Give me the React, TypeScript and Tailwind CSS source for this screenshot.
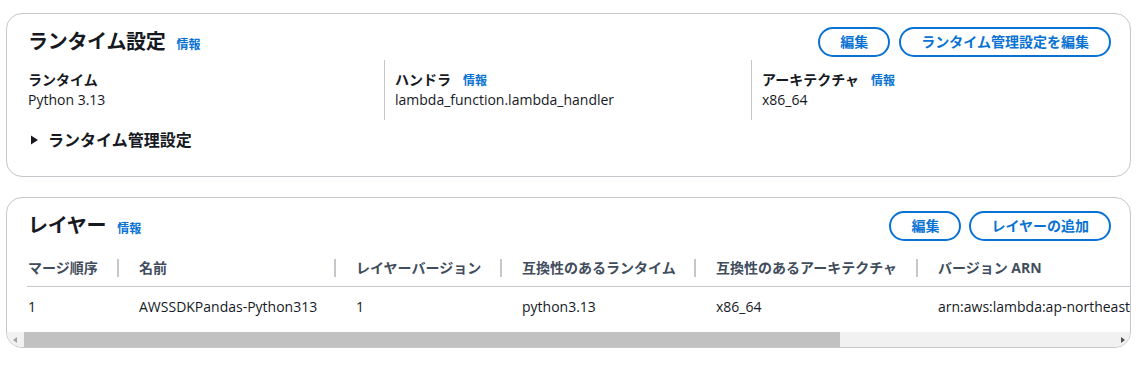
import React from 'react';

const font = { fontFamily: '"Open Sans", "Noto Sans CJK JP", sans-serif' };

const InfoLink = ({ className = '' }: { className?: string }) => (
  <a className={`text-[12px] font-bold text-[#0972d3] leading-[16px] ${className}`}>情報</a>
);

const PillButton = ({ children }: { children: React.ReactNode }) => (
  <button className="h-[30px] rounded-full border-2 border-[#0972d3] px-[20px] text-[14px] font-bold leading-[26px] text-[#0972d3] bg-white">
    {children}
  </button>
);

const KeyValue = ({ label, value, info, first }: { label: string; value: string; info?: boolean; first?: boolean }) => (
  <div className={`border-l pl-[10px] py-[10px] ${first ? 'border-transparent' : 'border-[#c6c6cd]'}`}>
    <div className="flex items-baseline h-[20px]">
      <span className="text-[14px] font-bold leading-[20px] text-[#16191f]">{label}</span>
      {info && <InfoLink className="ml-[12px]" />}
    </div>
    <div className="text-[14px] leading-[20px] text-[#16191f]">{value}</div>
  </div>
);

const cols = [
  { w: 'w-[92px]', pl: 'pl-[1px]', head: 'マージ順序', val: '1' },
  { w: 'w-[217px]', pl: 'pl-[20px]', head: '名前', val: 'AWSSDKPandas-Python313' },
  { w: 'w-[166px]', pl: 'pl-[20px]', head: 'レイヤーバージョン', val: '1' },
  { w: 'w-[194px]', pl: 'pl-[20px]', head: '互換性のあるランタイム', val: 'python3.13' },
  { w: 'w-[222px]', pl: 'pl-[20px]', head: '互換性のあるアーキテクチャ', val: 'x86_64' },
  { w: 'w-[560px]', pl: 'pl-[20px]', head: 'バージョン ARN', val: 'arn:aws:lambda:ap-northeast-1:336392948345:layer:AWSSDKPandas-Python313:1', last: true },
];

export default function App() {
  return (
    <div className="min-h-screen bg-white pt-[13px] text-[#16191f]" style={font}>
      {/* Runtime settings */}
      <div className="ml-[6px] w-[1125px] rounded-[16px] border border-[#c6c6cd] bg-white overflow-hidden pb-[26px]">
        <div className="flex items-center justify-between pl-[21px] pr-[19px] pt-[13px] h-[43px] box-border">
          <div className="flex items-baseline">
            <h2 className="text-[20px] font-bold leading-[26px] tracking-[-0.3px]">ランタイム設定</h2>
            <InfoLink className="ml-[11px]" />
          </div>
          <div className="flex gap-[9px]">
            <PillButton>編集</PillButton>
            <PillButton>ランタイム管理設定を編集</PillButton>
          </div>
        </div>

        <div className="mx-[10px] mt-[3px] grid grid-cols-3 w-[1101px]">
          <KeyValue label="ランタイム" value="Python 3.13" first />
          <KeyValue label="ハンドラ" value="lambda_function.lambda_handler" info />
          <KeyValue label="アーキテクチャ" value="x86_64" info />
        </div>

        <div className="mt-[10px] flex items-center gap-[4px] pl-[21px] h-[20px]">
          <svg width="16" height="16" viewBox="0 0 16 16">
            <path d="M3 3.5 L10 8 L3 12.5 Z" fill="#16191f" />
          </svg>
          <span className="text-[16px] font-bold leading-[20px]">ランタイム管理設定</span>
        </div>
      </div>

      {/* Layers */}
      <div className="ml-[6px] mt-[20px] w-[1125px] rounded-[16px] border border-[#c6c6cd] bg-white overflow-hidden">
        <div className="flex items-center justify-between pl-[21px] pr-[19px] pt-[13px] h-[43px] box-border">
          <div className="flex items-baseline">
            <h2 className="text-[20px] font-bold leading-[26px] tracking-[-0.3px]">レイヤー</h2>
            <InfoLink className="ml-[11px]" />
          </div>
          <div className="flex gap-[8px]">
            <PillButton>編集</PillButton>
            <PillButton>レイヤーの追加</PillButton>
          </div>
        </div>

        <div className="ml-[20px] mt-[9px] overflow-hidden">
          <div className="flex w-max border-b border-[#c6c6cd]">
            {cols.map(c => (
              <div key={c.head} className={`flex shrink-0 items-center py-[8px] ${c.w} ${c.pl}`}>
                <span className="text-[14px] font-bold leading-[20px] text-[#414d5c] whitespace-nowrap">{c.head}</span>
                {!c.last && <span className="ml-auto h-[18px] w-[2px] bg-[#c6c6cd]" />}
              </div>
            ))}
          </div>
          <div className="flex w-max pt-[10px] pb-[15px]">
            {cols.map(c => (
              <div key={c.head} className={`shrink-0 text-[14px] leading-[20px] text-[#16191f] whitespace-nowrap ${c.w} ${c.pl}`}>
                {c.val}
              </div>
            ))}
          </div>
        </div>

        {/* horizontal scrollbar */}
        <div className="flex h-[15px] bg-[#f1f1f1]">
          <div className="flex w-[15px] shrink-0 items-center justify-center">
            <svg width="6" height="8" viewBox="0 0 6 8"><path d="M5 1 L1 4 L5 7 Z" fill="#a3a3a3" /></svg>
          </div>
          <div className="ml-[2px] h-full w-[816px] bg-[#c1c1c1]" />
          <div className="flex-1" />
          <div className="flex w-[15px] shrink-0 items-center justify-center">
            <svg width="6" height="8" viewBox="0 0 6 8"><path d="M1 1 L5 4 L1 7 Z" fill="#505050" /></svg>
          </div>
        </div>
      </div>
    </div>
  );
}
